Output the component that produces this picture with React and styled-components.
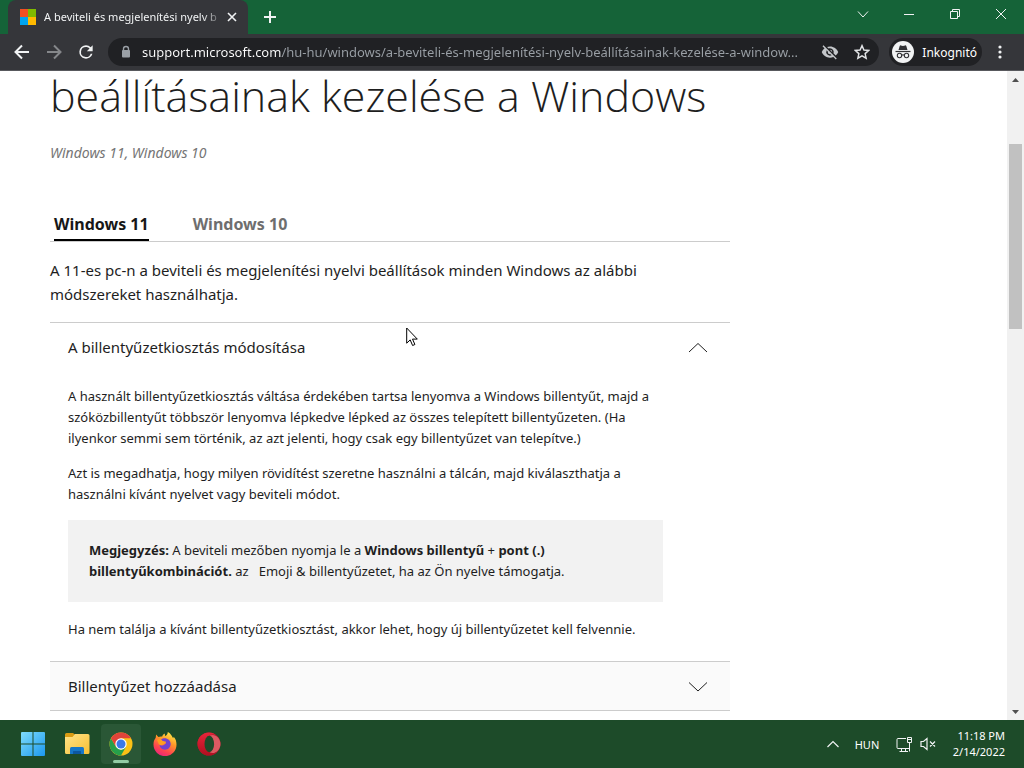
import React from 'react';
import styled, { createGlobalStyle } from 'styled-components';

const GlobalStyle = createGlobalStyle`
  *, *::before, *::after { box-sizing: border-box; }
  body {
    margin: 0;
    font-family: "Noto Sans", "Open Sans", sans-serif;
    color: #1e1e1e;
    background: #fff;
  }
  button, input { font: inherit; color: inherit; }
  button { background: none; border: 0; padding: 0; }
  h1, h2, p { margin: 0; }
  svg { display: block; flex: none; }
`;

const Screen = styled.div`
  position: relative;
  display: flex;
  flex-direction: column;
  height: 100vh;
  overflow: hidden;
`;

/* Browser chrome */

const TabStrip = styled.header`
  display: flex;
  flex: none;
  height: 34px;
  background: #156338;
  padding-left: 8px;
`;

const BrowserTab = styled.div`
  display: flex;
  align-items: center;
  width: 240px;
  padding: 0 8px 0 12px;
  border-radius: 8px 8px 0 0;
  background: #35363a;
  color: #f1f3f4;
`;

const TabTitle = styled.span`
  flex: 1;
  margin-left: 8px;
  font-size: 11px;
  line-height: 16px;
  white-space: nowrap;
  mask-image: linear-gradient(90deg, #000 88%, transparent);
`;

const IconButton = styled.button`
  display: flex;
  align-items: center;
  justify-content: center;
  width: ${(p) => p.$width || 32}px;
  height: ${(p) => p.$height || 32}px;
  color: ${(p) => p.$color || '#f1f3f4'};
`;

const WindowControls = styled.div`
  display: flex;
  margin-left: auto;
`;

const Toolbar = styled.nav`
  display: flex;
  flex: none;
  align-items: center;
  height: 37px;
  padding: 0 6px;
  background: #35363a;
  border-bottom: 1px solid #58595d;
`;

const AddressBar = styled.label`
  display: flex;
  flex: 1;
  align-items: center;
  height: 28px;
  margin-left: 6px;
  padding: 0 1px 0 12px;
  border-radius: 14px;
  background: #202124;
`;

const UrlInput = styled.input`
  flex: 1;
  min-width: 0;
  margin-left: 10px;
  padding: 0;
  border: 0;
  outline: 0;
  font-size: 13px;
  line-height: 20px;
  color: transparent;
  background: linear-gradient(90deg, #fff 140px, #9aa0a6 140px);
  background-clip: text;
`;

const IncognitoButton = styled.button`
  display: flex;
  align-items: center;
  gap: 8px;
  height: 28px;
  margin-left: 10px;
  padding: 0 5px 0 3px;
  border-radius: 14px;
  background: #202124;
  color: #fff;
  font-size: 12px;
`;

/* Page */

const Viewport = styled.div`
  display: flex;
  flex: 1;
  min-height: 0;
`;

const Main = styled.main`
  flex: 1;
  min-width: 0;
  padding: 0 50px;
`;

const Article = styled.article`
  max-width: 680px;
`;

const Title = styled.h1`
  font-family: "Open Sans", "Noto Sans", sans-serif;
  font-size: 43px;
  line-height: 50px;
  font-weight: 300;
  white-space: nowrap;
`;

const AppliesTo = styled.p`
  margin-top: 22px;
  font-size: 14px;
  line-height: 20px;
  font-style: italic;
  color: #757575;
`;

const TabList = styled.div`
  display: flex;
  gap: 44px;
  margin-top: 49px;
  padding-left: 4px;
  border-bottom: 1px solid #ccc;
`;

const PageTab = styled.button`
  padding-bottom: 3px;
  border-bottom: 2px solid ${(p) => (p.$active ? '#000' : 'transparent')};
  color: ${(p) => (p.$active ? '#171717' : '#6e6e6e')};
  font-size: 16px;
  line-height: 24px;
  font-weight: 700;
`;

const Intro = styled.p`
  margin: 16px 0;
  font-size: 15px;
  line-height: 24px;
  white-space: nowrap;
`;

const Section = styled.section`
  border-top: 1px solid #ccc;
`;

const SectionHeading = styled.h2`
  font-size: 15px;
  font-weight: 400;
`;

const SectionToggle = styled.button`
  display: flex;
  align-items: center;
  justify-content: space-between;
  width: 100%;
  height: 48px;
  padding: 0 22px 0 18px;
  text-align: left;
  background: ${(p) => (p.$shaded ? '#fafafa' : 'transparent')};
`;

const SectionBody = styled.div`
  display: flex;
  flex-direction: column;
  gap: 14px;
  padding: 15px 67px 21px 18px;
  font-size: 13px;
  line-height: 21px;
  white-space: nowrap;
`;

const Note = styled.aside`
  margin: 1px 0 3px;
  padding: 20px 21px;
  background: #f2f2f2;
`;

const ScrollBar = styled.div`
  display: flex;
  flex-direction: column;
  flex: none;
  align-items: center;
  width: 17px;
  background: #f1f1f1;
`;

const ScrollTrack = styled.div`
  flex: 1;
  padding-top: 56px;
`;

const ScrollThumb = styled.div`
  width: 13px;
  height: 185px;
  background: #c1c1c1;
`;

/* Taskbar */

const Taskbar = styled.footer`
  position: relative;
  display: flex;
  flex: none;
  align-items: center;
  height: 48px;
  padding: 0 19px 0 13px;
  background: #1d4b29;
  color: #fff;
`;

const Apps = styled.div`
  display: flex;
  gap: 4px;
`;

const AppButton = styled.button`
  position: relative;
  display: flex;
  align-items: center;
  justify-content: center;
  width: 40px;
  height: 40px;
  border-radius: 4px;
  background: ${(p) => (p.$active ? '#2a5736' : 'transparent')};
  &::after {
    content: "";
    display: ${(p) => (p.$active ? 'block' : 'none')};
    position: absolute;
    bottom: 1px;
    width: 16px;
    height: 3px;
    border-radius: 2px;
    background: #92cda4;
  }
`;

const Tray = styled.div`
  display: flex;
  align-items: center;
  margin-left: auto;
  font-size: 11px;
`;

const Clock = styled.time`
  width: 68px;
  line-height: 16px;
  text-align: right;
`;

const Language = styled.button`
  width: 44px;
`;

const Pointer = styled.svg`
  position: absolute;
  left: 406px;
  top: 327px;
`;

const Stroke = ({ d, size = 16, width = 1, box = 16, ...rest }) => (
  <svg width={size} height={size} viewBox={`0 0 ${box} ${box}`} fill="none" stroke="currentColor" strokeWidth={width} {...rest}>
    <path d={d} />
  </svg>
);

const Favicon = () => (
  <svg width="16" height="16" viewBox="0 0 16 16">
    <path fill="#f25022" d="M0 0h8v8H0z" />
    <path fill="#7fba00" d="M8 0h8v8H8z" />
    <path fill="#00a4ef" d="M0 8h8v8H0z" />
    <path fill="#ffb900" d="M8 8h8v8H8z" />
  </svg>
);

const ReloadIcon = () => (
  <svg width="20" height="20" viewBox="0 0 24 24" fill="currentColor">
    <path d="M17.65 6.35A7.96 7.96 0 0 0 12 4a8 8 0 1 0 7.73 10h-2.08A6 6 0 1 1 12 6c1.66 0 3.14.69 4.22 1.78L13 11h7V4z" />
  </svg>
);

const LockIcon = () => (
  <svg width="12" height="14" viewBox="0 0 12 14">
    <path d="M3.500 6V4a2.500 2.500 0 0 1 5 0v2" fill="none" stroke="#9aa0a6" strokeWidth="1.400" />
    <rect x="2" y="5" width="8" height="7.500" rx="1" fill="#9aa0a6" />
  </svg>
);

const EyeOffIcon = () => (
  <svg width="18" height="18" viewBox="0 0 24 24" fill="#c4c7ca">
    <path d="M12 7a5 5 0 0 1 4.64 6.83l2.92 2.92A11.8 11.8 0 0 0 23 12C21.270 7.610 17 4.500 12 4.500c-1.400 0-2.740.250-3.980.700l2.160 2.160C10.740 7.130 11.350 7 12 7zM2 4.270l2.280 2.280.460.460A11.800 11.800 0 0 0 1 12c1.730 4.390 6 7.500 11 7.500 1.550 0 3.030-.300 4.380-.840l.420.420L19.730 22 21 20.730 3.270 3 2 4.270zM7.530 9.800l1.550 1.550c-.050.210-.080.430-.080.650a3 3 0 0 0 3 3c.220 0 .440-.030.650-.080l1.550 1.550A5 5 0 0 1 7.530 9.800zm4.310-.780 3.150 3.150.020-.160a3 3 0 0 0-3-3l-.170.010z" />
  </svg>
);

const StarIcon = () => (
  <svg width="16" height="16" viewBox="0 0 24 24" fill="none" stroke="#e1e3e5" strokeWidth="2.2">
    <path d="M12 2.500l2.900 6.500 7 .700-5.200 4.700 1.500 6.900L12 17.700l-6.200 3.600 1.500-6.900L2.100 9.700l7-.700z" />
  </svg>
);

const IncognitoIcon = () => (
  <svg width="22" height="22" viewBox="0 0 22 22">
    <circle cx="11" cy="11" r="11" fill="#f1f3f4" />
    <path d="M6.500 9l1.200-4c.2-.6.700-.8 1.200-.6l2.100.6 2.100-.6c.5-.2 1 0 1.200.6l1.200 4z" fill="#303134" />
    <path d="M3.500 10.500h15" stroke="#303134" strokeWidth="1.200" />
    <g fill="none" stroke="#303134" strokeWidth="1.100">
      <circle cx="7.500" cy="14.500" r="2.200" />
      <circle cx="14.500" cy="14.500" r="2.200" />
      <path d="M9.700 14.200q1.300-.8 2.600 0" />
    </g>
  </svg>
);

const DotsIcon = () => (
  <svg width="4" height="16" viewBox="0 0 4 16" fill="currentColor">
    <circle cx="2" cy="3" r="1.600" />
    <circle cx="2" cy="8" r="1.600" />
    <circle cx="2" cy="13" r="1.600" />
  </svg>
);

const RestoreIcon = () => (
  <svg width="12" height="12" viewBox="0 0 12 12" fill="none" stroke="currentColor">
    <path d="M1.500 3.500h7v7h-7zM3.500 3.500v-2h7v7h-2" />
  </svg>
);

const ScrollArrow = ({ down }) => (
  <svg width="17" height="17" viewBox="0 0 17 17" fill="#505050">
    <path d={down ? 'M5 7h7l-3.500 4z' : 'M5 11h7L8.500 7z'} />
  </svg>
);

const StartIcon = () => (
  <svg width="24" height="24" viewBox="0 0 24 24">
    <defs>
      <linearGradient id="start" x1="0" y1="0" x2="1" y2="1">
        <stop offset="0" stopColor="#7fdcfc" />
        <stop offset="1" stopColor="#1b98ee" />
      </linearGradient>
    </defs>
    <path fill="url(#start)" d="M1 0h10.500v11.500H0V1q0-1 1-1zM12.500 0H23q1 0 1 1v10.500H12.500zM0 12.500h11.500V24H1q-1 0-1-1zM12.500 12.500H24V23q0 1-1 1H12.500z" />
  </svg>
);

const FolderIcon = () => (
  <svg width="26" height="24" viewBox="0 0 26 24">
    <defs>
      <linearGradient id="folder" x1="0" y1="0" x2="1" y2="1">
        <stop offset="0" stopColor="#ffe38a" />
        <stop offset="1" stopColor="#f6bf32" />
      </linearGradient>
    </defs>
    <path fill="#d99b13" d="M1 6V2.500Q1 1 2.500 1H9l2.500 2-2 3z" />
    <path fill="url(#folder)" d="M1 5h7.500L11 2h13q1.500 0 1.500 1.500v17q0 1.500-1.500 1.500H2.500Q1 22 1 20.500z" />
    <path fill="#1677c8" d="M6 22v-5.500Q6 15 7.500 15h11q1.500 0 1.500 1.500V22z" />
    <path fill="#0c57a0" d="M9 22v-2.500q0-.5.5-.5h7q.5 0 .5.500V22z" />
  </svg>
);

const ChromeIcon = () => (
  <svg width="24" height="24" viewBox="0 0 24 24">
    <circle cx="12" cy="12" r="11.500" fill="#fbc116" />
    <path fill="#269f4b" d="M2 6.300 7.100 14.900 12 17.700l4.900-2.800L12 23.500A11.500 11.500 0 0 1 2 6.300z" />
    <path fill="#e0443a" d="M2 6.300A11.500 11.500 0 0 1 22 6.300H12L7.100 14.900z" />
    <circle cx="12" cy="12" r="5.700" fill="#fff" />
    <circle cx="12" cy="12" r="4.500" fill="#3b79e8" />
  </svg>
);

const FirefoxIcon = () => (
  <svg width="24" height="24" viewBox="0 0 24 24">
    <defs>
      <linearGradient id="fox" x1=".8" y1="0" x2=".3" y2="1">
        <stop offset="0" stopColor="#fff04a" />
        <stop offset=".4" stopColor="#ff9628" />
        <stop offset=".75" stopColor="#ff4350" />
        <stop offset="1" stopColor="#e9257d" />
      </linearGradient>
    </defs>
    <path fill="url(#fox)" d="M14.800 0c3.700 2.100 4 4.500 5.400 6.300l.5-1.600c2 2.200 2.800 4.800 2.800 7.800A11.500 11.500 0 0 1 .5 12.800C.4 9 1.700 7.200 2.700 5.700l.4-3.200 2.300 2.600c1.200-.6 2.500-.8 3.800-.5.600-2 1.500-2.600 2.600-3.100L12 4c1.800-.6 2.700-2 2.800-4z" />
    <path fill="#7141cf" d="M8 7.500c3.700-3 9.500-.5 9.700 4.300.1 3.400-2.500 5.900-5.700 5.900-3.300 0-5.600-2.500-5.400-5.100 1.200 1.100 2.800 1.200 4.200.3 1-.7 2-1.100 2.300-2.200-1.300-.5-3.400-.2-3.900-1.500z" />
    <path fill="#ff9e20" d="M4 8c1.800-1.400 4.300-1.200 5.300.7.800.7 2.600.4 3.800 1-.3 1.400-1.900 1.800-3 2.800-2 1.500-4.600.5-4.700-1.500z" />
  </svg>
);

const OperaIcon = () => (
  <svg width="24" height="24" viewBox="0 0 24 24">
    <defs>
      <linearGradient id="opera" x1="0" y1="0" x2="0" y2="1">
        <stop offset="0" stopColor="#e8253a" />
        <stop offset="1" stopColor="#b00f20" />
      </linearGradient>
    </defs>
    <circle cx="12" cy="12" r="11.500" fill="#a8172a" />
    <path fill="#dc5a62" d="M12 4c3-2 7-1 9 1.500 3.300 4 3.300 9 0 13-2 2.500-6 3.500-9 1.500z" />
    <path fill="url(#opera)" d="M12 .5a11.500 11.500 0 1 0 0 23c3 0 5.500-1 7-2.900-4 2.300-10.300-.3-10.300-8.600S15 1.100 19 3.400C17.500 1.500 15 .5 12 .5z" />
    <ellipse cx="12.300" cy="12" rx="4.800" ry="8.300" fill="#1d4b29" />
  </svg>
);

const NetworkIcon = () => (
  <svg width="16" height="17" viewBox="0 0 16 17" fill="none" stroke="currentColor">
    <path d="M10 2.500H2q-1 0-1 1v8q0 1 1 1h11M5.500 12.500v3M9.500 12.500v3M3.500 15.500H12M11.500 1.500h4v5h-4zM13.500 6.500v9M11.500 3.500h4" />
  </svg>
);

const MutedIcon = () => (
  <svg width="16" height="14" viewBox="0 0 16 14" fill="none" stroke="currentColor" strokeWidth="1.200">
    <path d="M1 4.500h2.500L7 1.500v11l-3.500-3H1zM10 4.500l5 5M15 4.500l-5 5" />
  </svg>
);

function Accordion({ title, open, children }) {
  return (
    <Section>
      <SectionHeading>
        <SectionToggle $shaded={!open} aria-expanded={!!open}>
          {title}
          <Stroke size={20} box={20} d={open ? 'M1 15l9-8.500 9 8.500' : 'M1 6.500l9 8.500 9-8.500'} />
        </SectionToggle>
      </SectionHeading>
      {children && <SectionBody>{children}</SectionBody>}
    </Section>
  );
}

export default function App() {
  return (
    <Screen>
      <GlobalStyle />
      <TabStrip>
        <BrowserTab>
          <Favicon />
          <TabTitle>A beviteli és megjelenítési nyelv b</TabTitle>
          <IconButton $width={16} aria-label="Lap bezárása"><Stroke size={10} box={10} width={1.6} d="M1 1l8 8M9 1l-8 8" /></IconButton>
        </BrowserTab>
        <IconButton $width={44} $height={34} aria-label="Új lap"><Stroke size={14} box={14} width={2} d="M7 1v12M1 7h12" /></IconButton>
        <WindowControls>
          <IconButton $width={46} $height={28} aria-label="Lapok keresése"><Stroke size={12} box={12} d="M1 3.500l5 5.500 5-5.500" /></IconButton>
          <IconButton $width={46} $height={28} aria-label="Kis méret"><Stroke size={10} box={10} d="M0 5.500h10" /></IconButton>
          <IconButton $width={46} $height={28} aria-label="Előző méret"><RestoreIcon /></IconButton>
          <IconButton $width={46} $height={28} aria-label="Bezárás"><Stroke size={12} box={12} d="M1 1l10 10M11 1L1 11" /></IconButton>
        </WindowControls>
      </TabStrip>

      <Toolbar>
        <IconButton aria-label="Vissza"><Stroke width={2} d="M15 8H2M8 1.500L1.500 8 8 14.500" /></IconButton>
        <IconButton $color="#85878a" aria-label="Előre"><Stroke width={2} d="M1 8h13M8 1.500L14.500 8 8 14.500" /></IconButton>
        <IconButton aria-label="Újratöltés"><ReloadIcon /></IconButton>
        <AddressBar>
          <LockIcon />
          <UrlInput
            aria-label="Cím"
            readOnly
            value="support.microsoft.com/hu-hu/windows/a-beviteli-és-megjelenítési-nyelv-beállításainak-kezelése-a-window..."
          />
          <IconButton aria-label="Külső cookie-k letiltva"><EyeOffIcon /></IconButton>
          <IconButton aria-label="Könyvjelző"><StarIcon /></IconButton>
        </AddressBar>
        <IncognitoButton><IncognitoIcon />Inkognitó</IncognitoButton>
        <IconButton $width={36} aria-label="Menü"><DotsIcon /></IconButton>
      </Toolbar>

      <Viewport>
        <Main>
          <Article>
            <Title>beállításainak kezelése a Windows</Title>
            <AppliesTo>Windows 11, Windows 10</AppliesTo>
            <TabList role="tablist">
              <PageTab role="tab" aria-selected="true" $active>Windows 11</PageTab>
              <PageTab role="tab" aria-selected="false">Windows 10</PageTab>
            </TabList>
            <Intro>
              A 11-es pc-n a beviteli és megjelenítési nyelvi beállítások minden Windows az alábbi<br />
              módszereket használhatja.
            </Intro>
            <Accordion title="A billentyűzetkiosztás módosítása" open>
              <p>
                A használt billentyűzetkiosztás váltása érdekében tartsa lenyomva a Windows billentyűt, majd a<br />
                szóközbillentyűt többször lenyomva lépkedve lépked az összes telepített billentyűzeten. (Ha<br />
                ilyenkor semmi sem történik, az azt jelenti, hogy csak egy billentyűzet van telepítve.)
              </p>
              <p>
                Azt is megadhatja, hogy milyen rövidítést szeretne használni a tálcán, majd kiválaszthatja a<br />
                használni kívánt nyelvet vagy beviteli módot.
              </p>
              <Note>
                <b>Megjegyzés:</b> A beviteli mezőben nyomja le a <b>Windows billentyű</b> + <b>pont (.)</b><br />
                <b>billentyűkombinációt.</b> az &nbsp; Emoji &amp; billentyűzetet, ha az Ön nyelve támogatja.
              </Note>
              <p>Ha nem találja a kívánt billentyűzetkiosztást, akkor lehet, hogy új billentyűzetet kell felvennie.</p>
            </Accordion>
            <Accordion title="Billentyűzet hozzáadása" />
            <Section />
          </Article>
        </Main>
        <ScrollBar>
          <ScrollArrow />
          <ScrollTrack><ScrollThumb /></ScrollTrack>
          <ScrollArrow down />
        </ScrollBar>
      </Viewport>

      <Taskbar>
        <Apps>
          <AppButton aria-label="Start"><StartIcon /></AppButton>
          <AppButton aria-label="Fájlkezelő"><FolderIcon /></AppButton>
          <AppButton aria-label="Chrome" $active><ChromeIcon /></AppButton>
          <AppButton aria-label="Firefox"><FirefoxIcon /></AppButton>
          <AppButton aria-label="Opera"><OperaIcon /></AppButton>
        </Apps>
        <Tray>
          <IconButton $width={24} aria-label="Rejtett ikonok"><Stroke size={12} box={12} width={1.2} d="M0.500 9L6 3.500 11.500 9" /></IconButton>
          <Language>HUN</Language>
          <IconButton $width={30} aria-label="Hálózat"><NetworkIcon /></IconButton>
          <IconButton $width={18} aria-label="Hangerő"><MutedIcon /></IconButton>
          <Clock>11:18 PM<br />2/14/2022</Clock>
        </Tray>
      </Taskbar>

      <Pointer width="13" height="20" viewBox="0 0 13 20">
        <path d="M.7 1v15.200l3.500-3.300 2.400 5.600 2.300-1-2.400-5.400h4.800z" fill="#fff" stroke="#000" />
      </Pointer>
    </Screen>
  );
}
